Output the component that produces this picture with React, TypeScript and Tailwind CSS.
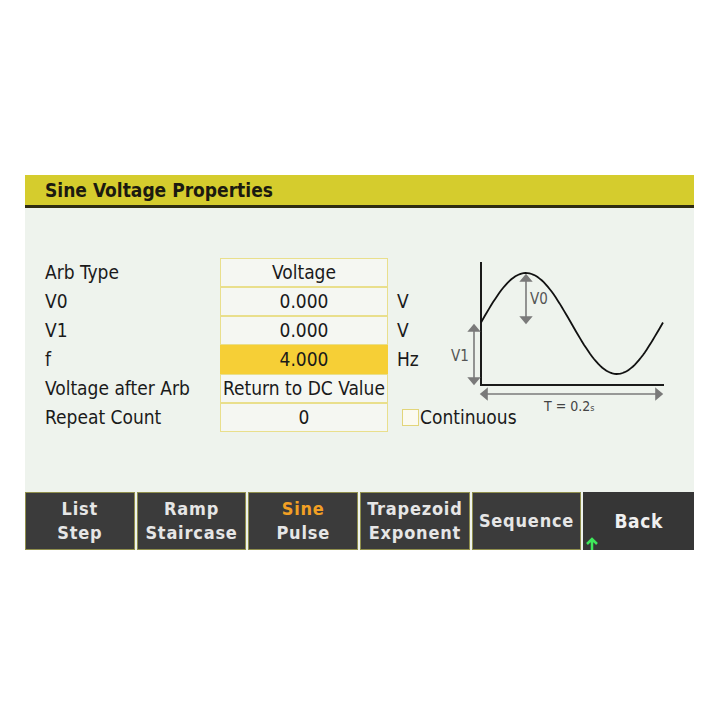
const fields = [
  { label: 'Arb Type', value: 'Voltage', unit: '' },
  { label: 'V0', value: '0.000', unit: 'V' },
  { label: 'V1', value: '0.000', unit: 'V' },
  { label: 'f', value: '4.000', unit: 'Hz', active: true },
  { label: 'Voltage after Arb', value: 'Return to DC Value', unit: '' },
  { label: 'Repeat Count', value: '0', unit: '', check: true },
];

const keys = [
  { top: 'List', bottom: 'Step' },
  { top: 'Ramp', bottom: 'Staircase' },
  { top: 'Sine', bottom: 'Pulse', selected: true },
  { top: 'Trapezoid', bottom: 'Exponent' },
  { top: 'Sequence' },
];

// one full sine period across the time axis
function sinePath() {
  const pts: string[] = [];
  for (let i = 0; i <= 90; i++) {
    const x = 41 + (i / 90) * 182;
    const y = 68.5 - 50.5 * Math.sin((i / 90) * Math.PI * 2 + 0.02);
    pts.push(`${i === 0 ? 'M' : 'L'}${x.toFixed(1)} ${y.toFixed(1)}`);
  }
  return pts.join(' ');
}

function SineDiagram() {
  return (
    <svg width="240" height="165" viewBox="0 0 240 165" className="shrink-0">
      <line x1="41" y1="7" x2="41" y2="131" stroke="#1a1a1a" strokeWidth="2" />
      <line x1="40" y1="130" x2="224" y2="130" stroke="#1a1a1a" strokeWidth="2" />
      <path d={sinePath()} fill="none" stroke="#111" strokeWidth="1.8" />
      <g stroke="#7a7a7a" strokeWidth="1.6" fill="#7a7a7a">
        <line x1="86" y1="21" x2="86" y2="67" />
        <path d="M81 26 L86 20 L91 26 Z" />
        <path d="M81 62 L86 68 L91 62 Z" />
        <line x1="34" y1="71" x2="34" y2="128" />
        <path d="M29 76 L34 70 L39 76 Z" />
        <path d="M29 123 L34 129 L39 123 Z" />
        <line x1="42" y1="139" x2="221" y2="139" />
        <path d="M47 134 L41 139 L47 144 Z" />
        <path d="M216 134 L222 139 L216 144 Z" />
      </g>
      <text x="90" y="49" fontSize="15" fill="#555" fontFamily="'DejaVu Sans Condensed',sans-serif">V0</text>
      <text x="11" y="106" fontSize="15" fill="#555" fontFamily="'DejaVu Sans Condensed',sans-serif">V1</text>
      <text x="104" y="156" fontSize="14" fill="#444" fontFamily="'DejaVu Sans Condensed',sans-serif">
        T = 0.2<tspan fontSize="9">s</tspan>
      </text>
    </svg>
  );
}

export default function App() {
  return (
    <div className="w-[720px] h-[720px] bg-white pt-[175px] pl-[25px] font-['DejaVu_Sans_Condensed',sans-serif]">
      <div className="w-[669px] flex flex-col">
        {/* title bar */}
        <div className="h-[33px] bg-[#d5cc2d] border-b-[3px] border-[#2f2c12] pl-[20px] flex items-center">
          <span className="text-[19px] font-bold text-[#1b1a10]">Sine Voltage Properties</span>
        </div>

        {/* body */}
        <div className="h-[284px] bg-[#eef3ed] flex pt-[50px] pl-[20px]">
          <div className="flex flex-col w-[415px]">
            {fields.map((f) => (
              <div key={f.label} className="flex items-center h-[29px]">
                <span className="w-[175px] shrink-0 text-[19px] text-[#1a1a1a]">{f.label}</span>
                <span
                  className={
                    f.active
                      ? 'w-[168px] h-[29px] shrink-0 flex items-center justify-center text-[19px] text-[#1a1a1a] bg-[#f6cf36] border border-[#f6cf36]'
                      : 'w-[168px] h-[29px] shrink-0 flex items-center justify-center text-[19px] text-[#1a1a1a] bg-[#f5f7f2] border border-[#e9df8c]'
                  }
                >
                  {f.value}
                </span>
                {f.check ? (
                  <span className="ml-[14px] flex items-center">
                    <span className="w-[17px] h-[17px] shrink-0 bg-[#fbfaf0] border border-[#e2d57a]" />
                    <span className="ml-[1px] text-[19px] text-[#1a1a1a]">Continuous</span>
                  </span>
                ) : (
                  <span className="ml-[9px] text-[19px] text-[#1a1a1a]">{f.unit}</span>
                )}
              </div>
            ))}
          </div>
          <div className="-ml-[20px] -mt-[3px]">
            <SineDiagram />
          </div>
        </div>

        {/* soft keys */}
        <div className="h-[58px] flex gap-[2px] bg-[#eef3ed]">
          {keys.map((k) => (
            <div
              key={k.top}
              className="w-[110px] h-full bg-[#3b3b3b] border border-[#8f8e4c] flex flex-col items-center justify-center leading-[24px] text-[18px] font-bold tracking-[0.8px] text-[#e6e6e6]"
            >
              <span className={k.selected ? 'text-[#f2a024]' : ''}>{k.top}</span>
              {k.bottom && <span>{k.bottom}</span>}
            </div>
          ))}
          <div className="relative w-[111px] h-full bg-[#363636] flex items-center justify-center text-[19px] font-bold text-[#f0f0f0] tracking-[0.6px]">
            Back
            <svg width="14" height="14" viewBox="0 0 14 14" className="absolute left-[2px] bottom-0">
              <path d="M7 14 V3 M2 8 L7 3 L12 8" stroke="#3ee85a" strokeWidth="2.5" fill="none" />
            </svg>
          </div>
        </div>
      </div>
    </div>
  );
}
